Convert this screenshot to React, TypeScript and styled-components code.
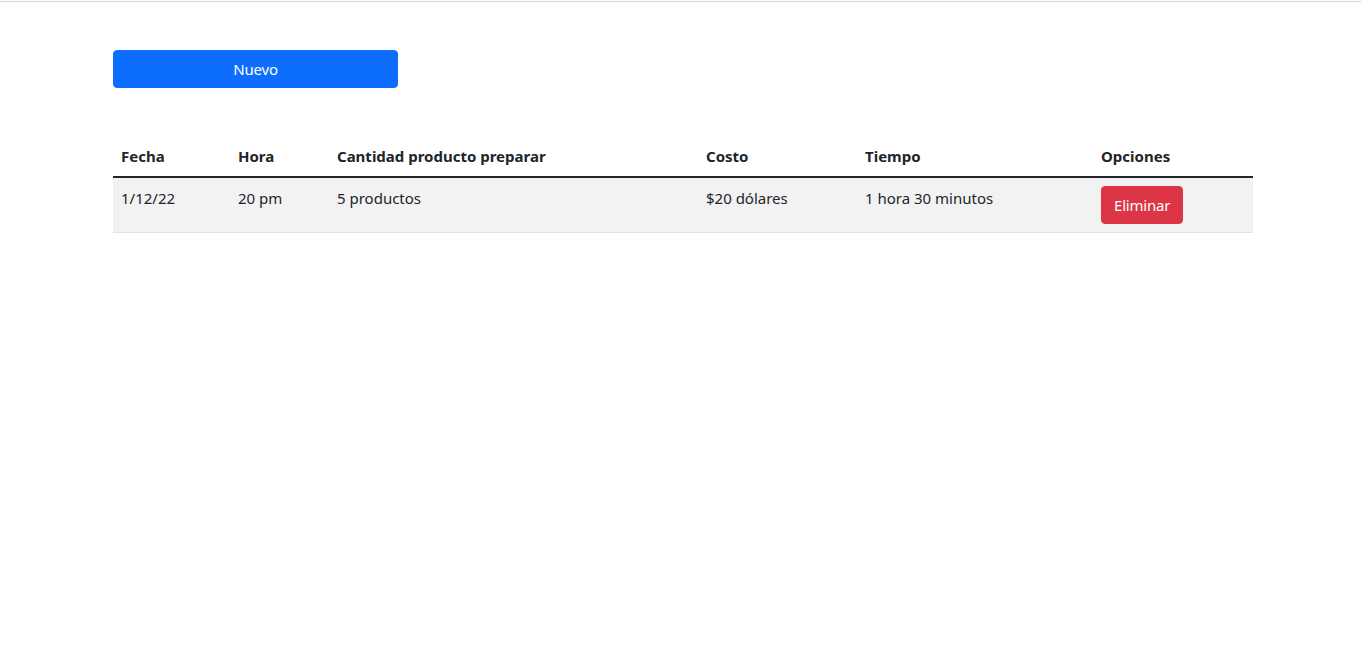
import React from "react";
import styled, { createGlobalStyle } from "styled-components";

const Global = createGlobalStyle`
  html, body { margin: 0; padding: 0; background: #fff; }
  body {
    font-family: "Noto Sans", "Open Sans", sans-serif;
    font-size: 16px;
    line-height: 1.5;
    color: #212529;
  }
  * { box-sizing: border-box; }
`;

const TopRule = styled.div`
  height: 2px;
  border-bottom: 1px solid #d2d2d2;
`;

const Container = styled.main`
  width: 1140px;
  margin-left: 113px;
  padding-top: 48px;
`;

const Button = styled.button<{ $variant: "primary" | "danger"; $width?: number }>`
  display: inline-flex;
  align-items: center;
  justify-content: center;
  height: 38px;
  padding: 0 12px;
  width: ${(p) => (p.$width ? `${p.$width}px` : "auto")};
  border: 1px solid ${(p) => (p.$variant === "primary" ? "#0d6efd" : "#dc3545")};
  background: ${(p) => (p.$variant === "primary" ? "#0d6efd" : "#dc3545")};
  color: #fff;
  border-radius: 4px;
  font-family: "Noto Sans", "Open Sans", sans-serif;
  font-size: 15px;
  letter-spacing: -0.2px;
  cursor: pointer;
`;

const Table = styled.table`
  margin-top: 48px;
  width: 1140px;
  border-collapse: collapse;
  table-layout: fixed;
`;

const Th = styled.th<{ $w: number }>`
  width: ${(p) => p.$w}px;
  text-align: left;
  padding: 8px;
  font-weight: 700;
  font-size: 15px;
  line-height: 24px;
  border-bottom: 2px solid #212529;
  vertical-align: bottom;
`;

const Row = styled.tr`
  background: #f2f2f2;
  border-bottom: 1px solid #dee2e6;
`;

const Td = styled.td`
  padding: 8px;
  font-size: 15px;
  line-height: 24px;
  vertical-align: top;
`;

const cols: [string, number][] = [
  ["Fecha", 117],
  ["Hora", 99],
  ["Cantidad producto preparar", 369],
  ["Costo", 159],
  ["Tiempo", 236],
  ["Opciones", 160],
];

export default function App() {
  return (
    <>
      <Global />
      <TopRule />
      <Container>
        <Button $variant="primary" $width={285}>Nuevo</Button>
        <Table>
          <thead>
            <tr>
              {cols.map(([label, w]) => (
                <Th key={label} $w={w}>{label}</Th>
              ))}
            </tr>
          </thead>
          <tbody>
            <Row>
              <Td>1/12/22</Td>
              <Td>20 pm</Td>
              <Td>5 productos</Td>
              <Td>$20 dólares</Td>
              <Td>1 hora 30 minutos</Td>
              <Td>
                <Button $variant="danger">Eliminar</Button>
              </Td>
            </Row>
          </tbody>
        </Table>
      </Container>
    </>
  );
}
